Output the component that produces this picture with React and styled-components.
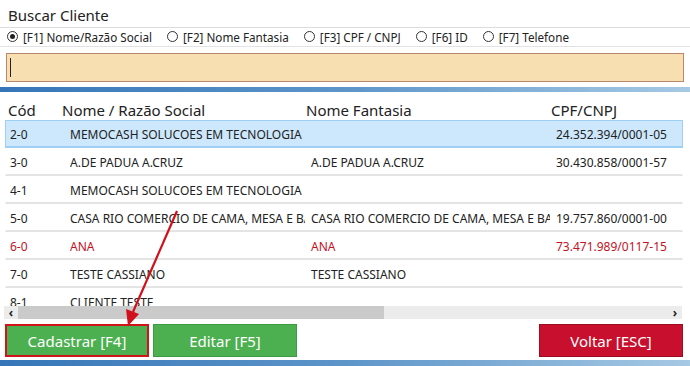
import React from 'react'
import styled, { createGlobalStyle } from 'styled-components'

const GlobalStyle = createGlobalStyle`
  html, body { margin: 0; padding: 0; background: #fff; }
  body { font-family: "Noto Sans", "Open Sans", sans-serif; color: #1a1a1a; }
  * { box-sizing: border-box; }
`

const rows = [
  { cod: '2-0', nome: 'MEMOCASH SOLUCOES EM TECNOLOGIA', fant: '', doc: '24.352.394/0001-05', selected: true },
  { cod: '3-0', nome: 'A.DE PADUA A.CRUZ', fant: 'A.DE PADUA A.CRUZ', doc: '30.430.858/0001-57' },
  { cod: '4-1', nome: 'MEMOCASH SOLUCOES EM TECNOLOGIA', fant: '', doc: '' },
  { cod: '5-0', nome: 'CASA RIO COMERCIO DE CAMA, MESA E BANHO', fant: 'CASA RIO COMERCIO DE CAMA, MESA E BANHO', doc: '19.757.860/0001-00' },
  { cod: '6-0', nome: 'ANA', fant: 'ANA', doc: '73.471.989/0117-15', red: true },
  { cod: '7-0', nome: 'TESTE CASSIANO', fant: 'TESTE CASSIANO', doc: '' },
  { cod: '8-1', nome: 'CLIENTE TESTE', fant: '', doc: '' },
]

const options = [
  { label: '[F1] Nome/Razão Social', checked: true },
  { label: '[F2] Nome Fantasia' },
  { label: '[F3] CPF / CNPJ' },
  { label: '[F6] ID' },
  { label: '[F7] Telefone' },
]

const App = () => {
  return (
    <Page>
      <GlobalStyle />
      <Title>Buscar Cliente</Title>
      <RadioRow>
        {options.map((o) => (
          <RadioItem key={o.label}>
            <Circle $checked={o.checked} />
            {o.label}
          </RadioItem>
        ))}
      </RadioRow>
      <SearchWrap>
        <SearchBox>
          <Caret />
        </SearchBox>
      </SearchWrap>
      <BlueBar />
      <Grid>
        <HeadRow>
          <HeadCell>Cód</HeadCell>
          <HeadCell>Nome / Razão Social</HeadCell>
          <HeadCell>Nome Fantasia</HeadCell>
          <HeadCell>CPF/CNPJ</HeadCell>
        </HeadRow>
        <Body>
          {rows.map((r) => (
            <Row key={r.cod} $selected={r.selected} $red={r.red}>
              <Cell>{r.cod}</Cell>
              <Cell>{r.nome}</Cell>
              <Cell>{r.fant}</Cell>
              <Cell>{r.doc}</Cell>
            </Row>
          ))}
        </Body>
        <ScrollBar>
          <ScrollArrow>‹</ScrollArrow>
          <Track>
            <Thumb />
          </Track>
          <ScrollArrow>›</ScrollArrow>
        </ScrollBar>
      </Grid>
      <Buttons>
        <Button $color="green" $highlight>Cadastrar [F4]</Button>
        <Button $color="green">Editar [F5]</Button>
        <Spacer />
        <Button $color="red">Voltar [ESC]</Button>
      </Buttons>
      <BlueBar $bottom />
      <Arrow width="690" height="366" viewBox="0 0 690 366">
        <line x1="177" y1="211" x2="133" y2="312" stroke="#d0101a" strokeWidth="2.2" />
        <polygon points="128,326 126,309 139,314" fill="#d0101a" />
      </Arrow>
    </Page>
  )
}

const Page = styled.div`
  position: relative;
  width: 690px;
  height: 366px;
  overflow: hidden;
  display: flex;
  flex-direction: column;
`

const Title = styled.div`
  height: 28px;
  padding: 5px 8px 0;
  font-size: 15px;
  color: #222;
  border-bottom: 1px solid #dcdcdc;
`

const RadioRow = styled.div`
  display: flex;
  align-items: center;
  height: 20px;
  padding-left: 7px;
  gap: 15px;
  font-size: 11.7px;
  color: #222;
  border-bottom: 1px solid #e2e2e2;
`

const RadioItem = styled.div`
  display: flex;
  align-items: center;
  gap: 5px;
`

const Circle = styled.span`
  width: 11px;
  height: 11px;
  border-radius: 50%;
  border: 1px solid #333;
  display: flex;
  align-items: center;
  justify-content: center;
  &::after {
    content: '';
    width: 5px;
    height: 5px;
    border-radius: 50%;
    background: ${({ $checked }) => ($checked ? '#222' : 'transparent')};
  }
`

const SearchWrap = styled.div`
  padding: 6px 6px 5px;
`

const SearchBox = styled.div`
  height: 29px;
  background: #f7dfb2;
  border: 1px solid #b9876c;
  padding: 4px 3px;
`

const Caret = styled.div`
  width: 1px;
  height: 19px;
  background: #222;
`

const BlueBar = styled.div`
  height: ${({ $bottom }) => ($bottom ? '6px' : '5px')};
  margin-top: ${({ $bottom }) => ($bottom ? '3px' : '0')};
  background: linear-gradient(90deg, #3676b8 0%, #5d95c9 50%, #a6c9e4 100%);
`

const Grid = styled.div`
  display: flex;
  flex-direction: column;
`

const HeadRow = styled.div`
  display: grid;
  grid-template-columns: 54px 244px 245px 1fr;
  height: 28px;
  align-items: end;
  padding: 0 0 0 8px;
  font-size: 15px;
  color: #222;
`

const HeadCell = styled.div`
  white-space: nowrap;
`

const Body = styled.div`
  height: 186px;
  overflow: hidden;
  padding: 0 7px 0 5px;
`

const Row = styled.div`
  display: grid;
  grid-template-columns: 60px 241px 245px 1fr;
  align-items: center;
  height: 28px;
  padding-left: 4px;
  padding-top: 2px;
  font-size: 12px;
  color: ${({ $red }) => ($red ? '#c3121f' : '#222')};
  background: ${({ $selected }) => ($selected ? '#cde8fc' : 'transparent')};
  border: 1px solid ${({ $selected }) => ($selected ? '#9fcff2' : 'transparent')};
  border-bottom: 2px solid ${({ $selected }) => ($selected ? '#9fcff2' : '#e4e4e4')};
`

const Cell = styled.div`
  white-space: nowrap;
  overflow: hidden;
  margin-right: 6px;
`

const ScrollBar = styled.div`
  display: flex;
  align-items: center;
  height: 13px;
  margin: 0 8px 0 4px;
  background: #ececec;
`

const ScrollArrow = styled.div`
  width: 14px;
  text-align: center;
  font-size: 12px;
  font-weight: bold;
  line-height: 13px;
  color: #222;
`

const Track = styled.div`
  flex: 1;
  height: 13px;
`

const Thumb = styled.div`
  width: 366px;
  height: 100%;
  background: #cacaca;
`

const Buttons = styled.div`
  display: flex;
  gap: 4px;
  padding: 5px 7px 0 5px;
`

const Spacer = styled.div`
  flex: 1;
`

const Button = styled.button`
  width: 144px;
  height: 33px;
  font-family: inherit;
  font-size: 15px;
  color: #fff;
  background: ${({ $color }) => ($color === 'red' ? '#c8102e' : '#4caf50')};
  border: ${({ $highlight, $color }) =>
    $highlight ? '2px solid #d1141c' : $color === 'red' ? '1px solid #9c0d20' : '1px solid #3e9a43'};
  padding: 0;
`

const Arrow = styled.svg`
  position: absolute;
  left: 0;
  top: 0;
  pointer-events: none;
`

export default App
